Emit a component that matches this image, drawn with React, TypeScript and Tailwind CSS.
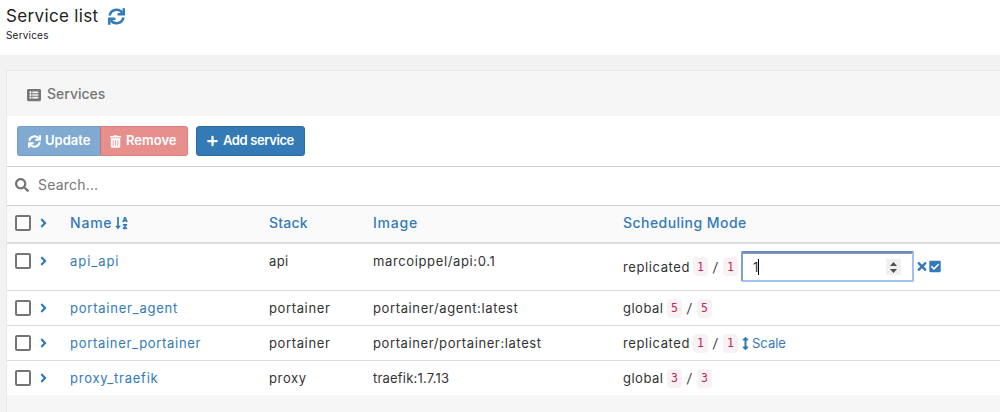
import type { ReactNode } from 'react';
import { FaListAlt, FaTrashAlt, FaPlus, FaSearch, FaAngleRight, FaSortAlphaDown, FaTimes, FaCheckSquare, FaArrowsAltV } from 'react-icons/fa';

const grid = 'grid grid-cols-[63px_199px_104px_250px_1fr]';

function RefreshIcon({ className }: { className: string }) {
  return (
    <svg viewBox="0 0 512 512" className={className} fill="none" stroke="currentColor" strokeWidth="76">
      <path d="M48 226A211 211 0 0 1 428 142" />
      <path d="M474 10V186H288" />
      <path d="M464 286A211 211 0 0 1 84 370" />
      <path d="M38 502V326H224" />
    </svg>
  );
}

function Selector() {
  return (
    <div className="flex items-start pl-2">
      <span className="h-4 w-4 shrink-0 rounded-[2px] border-2 border-[#757575] bg-white" />
      <FaAngleRight className="ml-2 mt-px h-3.5 w-[9px] text-[#337ab7]" />
    </div>
  );
}

function Code({ children }: { children: ReactNode }) {
  return (
    <code className="inline-flex h-[19px] w-[15px] items-center justify-center rounded-[4px] bg-[#f9f2f4] font-['DejaVu_Sans_Mono',monospace] text-[11.5px] text-[#c7254e]">
      {children}
    </code>
  );
}

type Service = { name: string; nameTrack: string; stack: string; stackTrack: string; image: string; imageTrack: string; mode: string; count: number; action?: 'edit' | 'scale' };

const services: Service[] = [
  { name: 'api_api', nameTrack: 'tracking-[0.95px]', stack: 'api', stackTrack: 'tracking-[0.4px]', image: 'marcoippel/api:0.1', imageTrack: 'tracking-[0.63px]', mode: 'replicated', count: 1, action: 'edit' },
  { name: 'portainer_agent', nameTrack: 'tracking-[0.77px]', stack: 'portainer', stackTrack: 'tracking-[0.63px]', image: 'portainer/agent:latest', imageTrack: 'tracking-[0.62px]', mode: 'global', count: 5 },
  { name: 'portainer_portainer', nameTrack: 'tracking-[0.7px]', stack: 'portainer', stackTrack: 'tracking-[0.63px]', image: 'portainer/portainer:latest', imageTrack: 'tracking-[0.61px]', mode: 'replicated', count: 1, action: 'scale' },
  { name: 'proxy_traefik', nameTrack: 'tracking-[0.76px]', stack: 'proxy', stackTrack: 'tracking-[0.65px]', image: 'traefik:1.7.13', imageTrack: 'tracking-[0.2px]', mode: 'global', count: 3 },
];

function Row({ s, first }: { s: Service; first: boolean }) {
  const edit = s.action === 'edit';
  return (
    <div className={`${grid} ${edit ? 'h-[46px]' : 'h-[35px]'} ${first ? '' : 'border-t border-[#dddddd]'} bg-white pt-2 leading-[18px]`}>
      <div className="pt-px"><Selector /></div>
      <span className={`text-[#337ab7] ${s.nameTrack}`}>{s.name}</span>
      <span className={s.stackTrack}>{s.stack}</span>
      <span className={s.imageTrack}>{s.image}</span>
      <div className={`flex items-center ${edit ? 'h-[29px]' : 'h-[18px]'}`}>
        <span className={s.mode === 'global' ? 'w-11 tracking-[0.5px]' : 'w-[70px] tracking-[0.6px]'}>{s.mode}</span>
        <Code>{s.count}</Code>
        <span className="flex w-[15px] justify-center">
          <span className="-skew-x-6">/</span>
        </span>
        <Code>{s.count}</Code>
        {edit && (
          <>
            <div className="ml-[3px] flex h-[31px] w-[173px] shrink-0 items-center rounded-[2px] border-2 border-[#a2c0f5] border-t-[#6589c9] border-l-[#7e9fd7] bg-white pl-[10px] pr-[11px] shadow-[inset_0_1px_0_#999]">
              <span className="pt-px">1</span>
              <span className="h-4 w-px bg-black" />
              <span className="ml-auto mt-px flex h-4 w-[15px] flex-col items-center justify-center gap-[3px] bg-[#f0f0f0]">
                <svg viewBox="0 0 7 4" className="h-1 w-[7px]" fill="#505050"><path d="M0 4L3.5 0L7 4Z" /></svg>
                <svg viewBox="0 0 7 4" className="h-1 w-[7px]" fill="#505050"><path d="M0 0L3.5 4L7 0Z" /></svg>
              </span>
            </div>
            <FaTimes className="ml-[3px] h-[13px] w-[10px] text-[#337ab7]" />
            <FaCheckSquare className="ml-[2px] h-[13px] w-3 text-[#337ab7]" />
          </>
        )}
        {s.action === 'scale' && (
          <span className="flex items-center text-[#337ab7]">
            <FaArrowsAltV className="ml-[4px] h-[13px] w-[7px]" />
            <span className="ml-[3px]">Scale</span>
          </span>
        )}
      </div>
    </div>
  );
}

export default function App() {
  return (
    <div className="h-[412px] w-[1000px] overflow-hidden bg-[#f2f2f2] font-[Inter,sans-serif] text-[13px] text-[#333333]">
      <header className="h-[55px] bg-white pl-[6px] pt-[5px]">
        <div className="flex h-[22px] items-center text-[17px] text-[#222]">
          <h1 className="w-[102px] pt-[2px] tracking-[0.35px]">Service list</h1>
          <RefreshIcon className="h-[17px] w-[17px] text-[#337ab7]" />
        </div>
        <div className="text-[10px] leading-4 tracking-[0.2px] text-[#222]">Services</div>
      </header>
      <main className="ml-[6px] mt-[15px] h-[342px] border-l border-t border-[#e7e7e7] bg-[#f6f6f6]">
        <div className="flex h-[45px] items-center pl-5 pt-[2px] text-[14px] font-medium leading-5 text-[#767676]">
          <FaListAlt className="mr-[6px] h-3.5 w-3.5" />
          <span className="pb-px">Services</span>
        </div>
        <div className="flex h-[50px] items-start bg-white pl-[10px] pt-[10px] font-semibold text-white">
          <div className="flex h-[30px]">
            <button className="flex w-[83px] items-center rounded-l-[3px] border border-r-0 border-[#769fc3] bg-[#80aad1] pl-[10px]"><RefreshIcon className="mr-1 h-[13px] w-[13px]" />Update</button>
            <button className="flex w-[88px] items-center rounded-r-[3px] border border-[#dd807e] border-l-[#c46c78] bg-[#e68f8d] pl-[9px]"><FaTrashAlt className="mr-[5px] h-[13px] w-[11px]" />Remove</button>
          </div>
          <button className="ml-2 flex h-[30px] w-[109px] items-center rounded-[3px] border border-[#2e6da4] bg-[#337ab7] pl-[10px] tracking-[-0.4px]"><FaPlus className="mr-[5px] h-3 w-[11px]" />Add service</button>
        </div>
        <div className="flex h-10 items-center border-y border-[#cfcfcf] bg-white pb-[3px] pl-2 text-[14px] tracking-[0.2px] text-[#767676]">
          <FaSearch className="mr-[9px] h-3.5 w-3.5" />
          <span>Search...</span>
        </div>
        <div className={`${grid} h-[38px] border-b-2 border-[#dddddd] bg-[#fafafa] pt-2 text-[14px] font-medium leading-[18px] text-[#337ab7]`}>
          <div className="pt-px"><Selector /></div>
          <span className="flex h-[18px] items-center tracking-[0.8px]">Name<FaSortAlphaDown className="ml-[3px] h-[14px] w-[13px]" /></span>
          <span className="tracking-[0.2px]">Stack</span>
          <span className="tracking-[0.8px]">Image</span>
          <span className="tracking-[0.46px]">Scheduling Mode</span>
        </div>
        {services.map((s, i) => <Row key={s.name} s={s} first={i === 0} />)}
      </main>
    </div>
  );
}
